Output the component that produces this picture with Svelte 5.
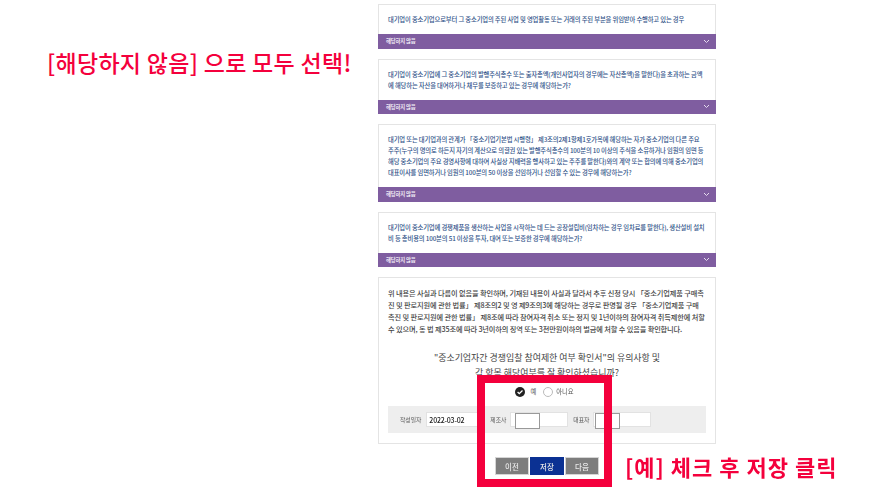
<script>
	const questions = [
		{
			lines: ['대기업이 중소기업으로부터 그 중소기업의 주된 사업 및 영업활동 또는 거래의 주된 부분을 위임받아 수행하고 있는 경우']
		},
		{
			lines: [
				'대기업이 중소기업에 그 중소기업의 발행주식총수 또는 출자총액(개인사업자의 경우에는 자산총액)을 말한다)을 초과하는 금액',
				'에 해당하는 자산을 대여하거나 채무를 보증하고 있는 경우에 해당하는가?'
			]
		},
		{
			lines: [
				'대기업 또는 대기업과의 관계가 「중소기업기본법 시행령」 제3조의2제1항제1호가목에 해당하는 자가 중소기업의 다른 주요',
				'주주(누구의 명의로 하든지 자기의 계산으로 의결권 있는 발행주식총수의 100분의 10 이상의 주식을 소유하거나 임원의 임면 등',
				'해당 중소기업의 주요 경영사항에 대하여 사실상 지배력을 행사하고 있는 주주를 말한다)와의 계약 또는 합의에 의해 중소기업의',
				'대표이사를 임면하거나 임원의 100분의 50 이상을 선임하거나 선임할 수 있는 경우에 해당하는가?'
			]
		},
		{
			lines: [
				'대기업이 중소기업에 경쟁제품을 생산하는 사업을 시작하는 데 드는 공장설립비(임차하는 경우 임차료를 말한다), 생산설비 설치',
				'비 등 총비용의 100분의 51 이상을 투자, 대여 또는 보증한 경우에 해당하는가?'
			]
		}
	];

	const notice = [
		'위 내용은 사실과 다름이 없음을 확인하며, 기재된 내용이 사실과 달라서 추후 신청 당시 「중소기업제품 구매촉',
		'진 및 판로지원에 관한 법률」 제8조의2 및 영 제9조의3에 해당하는 경우로 판명될 경우 「중소기업제품 구매',
		'촉진 및 판로지원에 관한 법률」 제8조에 따라 참여자격 취소 또는 정지 및 1년이하의 참여자격 취득제한에 처할',
		'수 있으며, 동 법 제35조에 따라 3년이하의 징역 또는 3천만원이하의 벌금에 처할 수 있음을 확인합니다.'
	];
</script>

<div class="page">
	<main class="form">
		{#each questions as q}
			<section class="card">
				<div class="q-text">
					{#each q.lines as line}<p>{line}</p>{/each}
				</div>
				<div class="select">
					<span>해당하지 않음</span>
					<svg width="7" height="5" viewBox="0 0 7 5"><path d="M1 1l2.500 2.500L6 1" fill="none" stroke="#e6dcef" stroke-width="1" /></svg>
				</div>
			</section>
		{/each}

		<section class="card confirm">
			<div class="notice">
				{#each notice as line}<p>{line}</p>{/each}
			</div>
			<h2>"중소기업자간 경쟁입찰 참여제한 여부 확인서"의 유의사항 및<br />각 항목 해당여부를 잘 확인하셨습니까?</h2>
			<div class="radios">
				<span class="radio">
					<svg width="10" height="10" viewBox="0 0 10 10"><circle cx="5" cy="5" r="5" fill="#222" /><path d="M2.600 5l1.700 1.700 3.200-3.200" fill="none" stroke="#fff" stroke-width="1.300" /></svg>
					예
				</span>
				<span class="radio no">
					<svg width="10" height="10" viewBox="0 0 10 10"><circle cx="5" cy="5" r="4.500" fill="#fff" stroke="#bbb" /></svg>
					아니요
				</span>
			</div>
			<div class="sign">
				<label>작성일자</label>
				<div class="field date">2022-03-02</div>
				<label class="maker">제조사</label>
				<div class="field name"><span class="mask first"></span></div>
				<label class="boss">대표자</label>
				<div class="field name"><span class="mask"></span></div>
			</div>
		</section>

		<div class="buttons">
			<button type="button">이전</button>
			<button type="button" class="save">저장</button>
			<button type="button">다음</button>
		</div>
	</main>

	<!-- annotations over the capture -->
	<p class="note top">[해당하지 않음] 으로 모두 선택!</p>
	<p class="note bottom">[예] 체크 후 저장 클릭</p>
	<div class="red-box"></div>
</div>

<style>
	:global(body) { margin: 0; background: #fff; }

	.page {
		position: relative;
		width: 885px;
		height: 498px;
		overflow: hidden;
		font-family: "Noto Sans CJK KR", "Noto Sans", sans-serif;
	}

	.form {
		width: 338px;
		margin-left: 378px;
		padding-top: 4px;
		display: flex;
		flex-direction: column;
		filter: blur(0.35px);
	}

	.card {
		box-sizing: border-box;
		border: 1px solid #e4e4e4;
		border-bottom: none;
		margin-bottom: 10px;
		background: #fff;
	}

	.q-text { padding: 9px 9px 9px; }
	.q-text p {
		margin: 0;
		font-size: 6.300px;
		font-weight: 500;
		line-height: 11px;
		letter-spacing: -0.14px;
		color: #2f5288;
		white-space: nowrap;
	}

	.select {
		height: 14.500px;
		margin: 0 -1px;
		padding: 0 6px 0 8px;
		display: flex;
		align-items: center;
		justify-content: space-between;
		background: #7f5da0;
	}
	.select span {
		font-size: 5.400px;
		font-weight: 700;
		letter-spacing: -0.2px;
		color: #f1ecf6;
	}

	.confirm {
		height: 167px;
		margin-bottom: 0;
		border-bottom: 1px solid #e4e4e4;
	}

	.notice { padding: 8.600px 9px 0; }
	.notice p {
		margin: 0;
		font-size: 7.200px;
		font-weight: 500;
		line-height: 12.200px;
		letter-spacing: -0.12px;
		color: #444;
		white-space: nowrap;
	}

	h2 {
		margin: 15px 0 0;
		font-size: 8.950px;
		font-weight: 400;
		line-height: 15px;
		text-align: center;
		color: #444;
		white-space: nowrap;
	}

	.radios {
		margin-top: 7px;
		display: flex;
		justify-content: center;
		gap: 7px;
		padding-right: 5px;
	}
	.radio {
		display: flex;
		align-items: center;
		gap: 5px;
		font-size: 6.300px;
		line-height: 10px;
		color: #555;
	}
	.radio.no { gap: 3px; }

	.sign {
		box-sizing: border-box;
		height: 27px;
		margin: 8.600px 9px 0;
		padding-left: 12px;
		display: flex;
		align-items: center;
		background: #eeeeee;
	}
	label {
		font-size: 5.800px;
		color: #555;
		white-space: nowrap;
	}
	.field {
		box-sizing: border-box;
		height: 15px;
		margin-left: 4px;
		display: flex;
		align-items: center;
		background: #fff;
		border: 1px solid #e2e2e2;
	}
	.date {
		width: 55px;
		margin-left: 5px;
		padding-left: 2px;
		font-size: 7px;
		font-weight: 500;
		letter-spacing: -0.2px;
		color: #222;
	}
	.name { position: relative; width: 58px; }
	.mask {
		position: absolute;
		left: 1px;
		top: 0;
		width: 25px;
		height: 16px;
		background: #fff;
		border: 1px solid #999;
		box-sizing: border-box;
	}
	.mask.first { left: 4px; }
	.maker { margin-left: 9px; }
	.boss { margin-left: 5px; }

	.buttons {
		margin: 13px 0 0 117px;
		display: flex;
		gap: 1px;
	}
	button {
		width: 34px;
		height: 18px;
		padding: 0;
		border: 1px solid #d5d5d5;
		background: #7d7d7d;
		color: #e8e8e8;
		font: 500 7.500px "Noto Sans CJK KR", sans-serif;
	}
	button.save { background: #0b3193; border-color: #0b3193; }

	.note {
		position: absolute;
		margin: 0;
		color: #f4003c;
		font-weight: 500;
		white-space: nowrap;
	}
	.top { left: 47px; top: 46px; font-size: 23px; line-height: 32px; letter-spacing: 0.3px; }
	.bottom { left: 625px; top: 451px; font-size: 22px; line-height: 30px; font-weight: 700; letter-spacing: 1px; }

	.red-box {
		position: absolute;
		left: 477px;
		top: 375px;
		width: 135px;
		height: 112px;
		box-sizing: border-box;
		border: 8px solid #f4003c;
	}
</style>
